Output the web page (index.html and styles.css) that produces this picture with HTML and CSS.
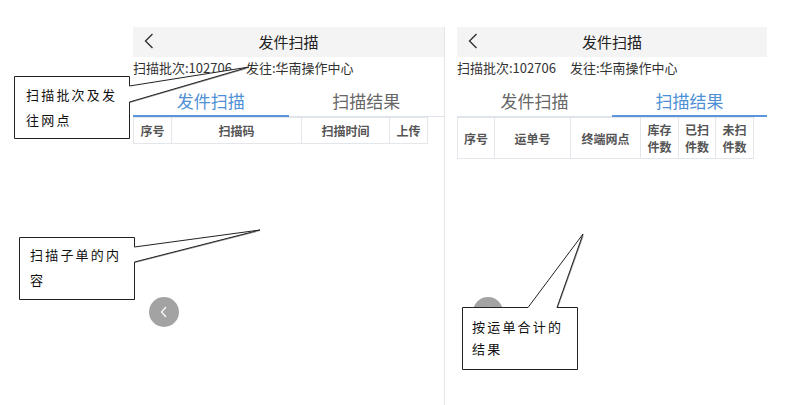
FILE: index.html
```html
<!DOCTYPE html>
<html lang="zh">
  <head>
    <meta charset="UTF-8" />
    <meta name="viewport" content="width=device-width, initial-scale=1.0" />
    <title>发件扫描</title>
    <link rel="stylesheet" href="styles.css">
  </head>
  <body>
    <div class="page">
      <!-- left screen: send scan -->
      <div class="screen">
        <div class="screen__header">
          <svg class="screen__back" width="10" height="16" viewBox="0 0 10 16"><path d="M8.5 1 L1.5 8 L8.5 15" fill="none" stroke="#333" stroke-width="1.4"/></svg>
          <span class="screen__title">发件扫描</span>
        </div>
        <div class="screen__info">扫描批次:102706<span class="screen__info--gap"></span>发往:华南操作中心</div>
        <div class="tabs">
          <div class="tabs__tab tabs__tab--active">发件扫描</div>
          <div class="tabs__tab">扫描结果</div>
        </div>
        <table class="grid grid--send">
          <colgroup><col style="width:38px"><col style="width:130px"><col style="width:88px"><col style="width:38px"></colgroup>
          <tr>
            <th>序号</th>
            <th>扫描码</th>
            <th>扫描时间</th>
            <th>上传</th>
          </tr>
        </table>
        <div class="fab"><svg width="8" height="12" viewBox="0 0 8 12"><path d="M6 1 L1.5 6 L6 11" fill="none" stroke="#fff" stroke-width="1.2"/></svg></div>
      </div>

      <div class="divider"></div>

      <!-- right screen: scan result -->
      <div class="screen screen--right">
        <div class="screen__header">
          <svg class="screen__back" width="10" height="16" viewBox="0 0 10 16"><path d="M8.5 1 L1.5 8 L8.5 15" fill="none" stroke="#333" stroke-width="1.4"/></svg>
          <span class="screen__title">发件扫描</span>
        </div>
        <div class="screen__info">扫描批次:102706<span class="screen__info--gap"></span>发往:华南操作中心</div>
        <div class="tabs">
          <div class="tabs__tab">发件扫描</div>
          <div class="tabs__tab tabs__tab--active">扫描结果</div>
        </div>
        <table class="grid grid--result">
          <colgroup><col style="width:37px"><col style="width:76px"><col style="width:70px"><col style="width:38px"><col style="width:37px"><col style="width:38px"></colgroup>
          <tr>
            <th>序号</th>
            <th>运单号</th>
            <th>终端网点</th>
            <th>库存<br>件数</th>
            <th>已扫<br>件数</th>
            <th>未扫<br>件数</th>
          </tr>
        </table>
        <div class="fab"><svg width="8" height="12" viewBox="0 0 8 12"><path d="M6 1 L1.5 6 L6 11" fill="none" stroke="#fff" stroke-width="1.2"/></svg></div>
      </div>

      <!-- annotation callouts -->
      <svg class="callouts" width="786" height="405" viewBox="0 0 786 405">
        <g fill="#999" transform="translate(1,1)">
          <path d="M14 76 H129 V86 L249 67 L129 102 V138 H14 Z"/>
          <path d="M19 237 H134 V247 L260 230 L134 262 V299 H19 Z"/>
          <path d="M462 307 H528 L583 234 L557 307 H577 V369 H462 Z"/>
        </g>
        <g fill="#fff" stroke="#222" stroke-width="1">
          <path d="M14.5 76.5 H129.5 V86 L249 67 L129.5 102 V138.5 H14.5 Z"/>
          <path d="M19.5 237.5 H134.5 V247 L260 230 L134.5 262 V299.5 H19.5 Z"/>
          <path d="M462.5 307.5 H528 L583 234 L557 307.5 H577.5 V369.5 H462.5 Z"/>
        </g>
      </svg>
      <div class="note note--batch">扫描批次及发<br>往网点</div>
      <div class="note note--items">扫描子单的内<br>容</div>
      <div class="note note--result">按运单合计的<br>结果</div>
    </div>
  </body>
</html>
```

FILE: styles.css
```css
*{margin:0;padding:0;box-sizing:border-box;}
body{font-family:"Noto Sans CJK SC","Noto Sans",sans-serif;background:#fff;color:#333;}
.page{position:relative;width:786px;height:405px;display:flex;padding:27px 0 0 133px;overflow:hidden;}
.screen{position:relative;width:311px;}
.screen--right{width:310px;margin-left:12px;}
.divider{width:1px;background:#e6e6e6;}
.screen__header{position:relative;height:30px;background:#f4f4f4;display:flex;align-items:center;justify-content:center;}
.screen__back{position:absolute;left:11px;top:6px;}
.screen__title{font-size:15px;color:#222;line-height:30px;}
.screen__info{height:22px;line-height:22px;font-size:13px;color:#333;white-space:nowrap;}
.screen__info--gap{display:inline-block;width:14px;}
.tabs{display:flex;height:38px;border-bottom:1px solid #dde3ea;}
.tabs__tab{flex:1;text-align:center;font-size:17px;line-height:24px;padding-top:10px;color:#666;}
.tabs__tab--active{color:#4e8fd6;border-bottom:2px solid #5a97da;margin-bottom:-1px;}
.grid{border-collapse:collapse;table-layout:fixed;}
.grid--send{width:294px;}
.grid--result{width:296px;}
.grid th{border:1px solid #e3e6ea;height:26px;font-size:12px;font-weight:bold;color:#555;text-align:center;line-height:15px;}
.grid--result th{height:41px;line-height:17px;}
.fab{position:absolute;left:16px;top:270px;width:30px;height:30px;border-radius:50%;background:#a3a3a3;display:flex;align-items:center;justify-content:center;}
.callouts{position:absolute;left:0;top:0;}
.note{position:absolute;font-size:13px;letter-spacing:2.2px;color:#111;}
.note--batch{left:26px;top:82px;line-height:25px;}
.note--items{left:30px;top:242px;line-height:25px;}
.note--result{left:472px;top:316px;line-height:22px;}
```
